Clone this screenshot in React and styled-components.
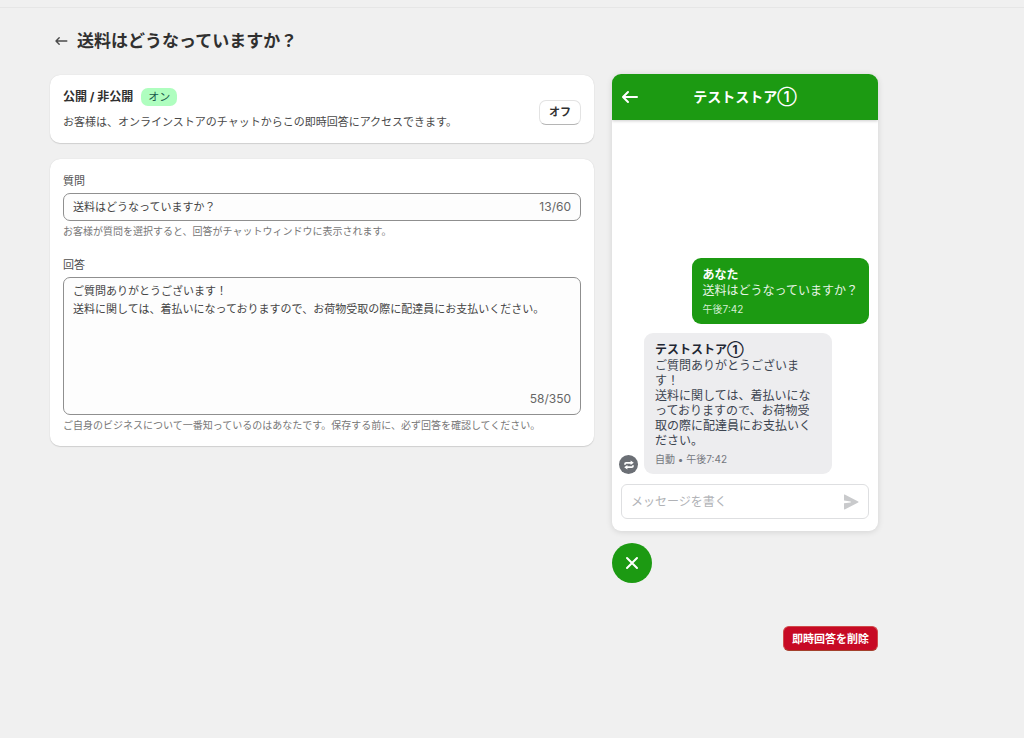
import React, { useState } from "react"
import styled, { createGlobalStyle } from "styled-components"


const storeName = "テストストア①"

const App = () => {

  const [question, setQuestion] = useState("送料はどうなっていますか？")
  const [answer, setAnswer] = useState(
    "ご質問ありがとうございます！\n送料に関しては、着払いになっておりますので、お荷物受取の際に配達員にお支払いください。"
  )

  return (
    <>
      <GlobalStyle />
      <TopBar />
      <Page>
        <TitleRow>
          <BackLink href="#" aria-label="戻る">
            <svg width="14" height="12" viewBox="0 0 14 12" fill="none" stroke="#4a4a4a" strokeWidth="1.4" strokeLinecap="round" strokeLinejoin="round">
              <path d="M12.8 6H2.5M5.2 2.7L2 6L5.2 9.3" />
            </svg>
          </BackLink>
          <h1>送料はどうなっていますか？</h1>
        </TitleRow>

        <Columns>
          <Main>
            <StatusCard>
              <div>
                <StatusHeading>
                  <h2>公開 / 非公開</h2>
                  <Badge>オン</Badge>
                </StatusHeading>
                <StatusText>お客様は、オンラインストアのチャットからこの即時回答にアクセスできます。</StatusText>
              </div>
              <ToggleButton type="button">オフ</ToggleButton>
            </StatusCard>

            <FormCard>
              <Field>
                <Label htmlFor="question">質問</Label>
                <InputBox>
                  <TextInput id="question" value={question} onChange={e => setQuestion(e.target.value)} />
                  <Counter>{question.length}/60</Counter>
                </InputBox>
                <Help>お客様が質問を選択すると、回答がチャットウィンドウに表示されます。</Help>
              </Field>
              <Field>
                <Label htmlFor="answer">回答</Label>
                <AreaBox>
                  <TextArea id="answer" rows={6} value={answer} onChange={e => setAnswer(e.target.value)} />
                  <Counter>{answer.length}/350</Counter>
                </AreaBox>
                <Help>ご自身のビジネスについて一番知っているのはあなたです。保存する前に、必ず回答を確認してください。</Help>
              </Field>
            </FormCard>
          </Main>

          <Side>
            <Chat>
              <ChatHeader>
                <ChatBack type="button" aria-label="戻る">
                  <svg width="18" height="14" viewBox="0 0 18 14" fill="none" stroke="#fff" strokeWidth="2" strokeLinecap="round" strokeLinejoin="round">
                    <path d="M16 7H2.4M7 2L2 7L7 12" />
                  </svg>
                </ChatBack>
                <h2>{storeName}</h2>
              </ChatHeader>
              <Messages>
                <Bubble $own>
                  <strong>あなた</strong>
                  <p>{question}</p>
                  <Time $own>午後7:42</Time>
                </Bubble>
                <BotRow>
                  <BotIcon>
                    <svg width="12" height="12" viewBox="0 0 12 12" fill="none" stroke="#fff" strokeWidth="1.7">
                      <path d="M2 5.8V5Q2 3.8 3.2 3.8H8" />
                      <path d="M10 6.2V7Q10 8.2 8.8 8.2H4" />
                      <path d="M7.6 1.4L10.8 3.8L7.6 6ZM4.4 6L1.2 8.2L4.4 10.6Z" fill="#fff" stroke="none" />
                    </svg>
                  </BotIcon>
                  <Bubble>
                    <strong>{storeName}</strong>
                    <p>{answer}</p>
                    <Time>自動 • 午後7:42</Time>
                  </Bubble>
                </BotRow>
              </Messages>
              <Composer>
                <input type="text" placeholder="メッセージを書く" aria-label="メッセージを書く" />
                <button type="button" aria-label="送信">
                  <svg width="16" height="16" viewBox="0 0 16 16" fill="#c9cacc">
                    <path d="M1 .8Q1 .2 1.7 .5L15.2 7.4Q16 8 15.2 8.5L1.7 15.5Q1 15.8 1 15.1V9.3L7.6 8.5Q8.2 8 7.6 7.4L1 6.6Z" />
                  </svg>
                </button>
              </Composer>
            </Chat>
            <CloseButton type="button" aria-label="閉じる">
              <svg width="14" height="14" viewBox="0 0 14 14" fill="none" stroke="#fff" strokeWidth="2" strokeLinecap="round">
                <path d="M2 2L12 12M12 2L2 12" />
              </svg>
            </CloseButton>
          </Side>
        </Columns>

        <Footer>
          <DeleteButton type="button">即時回答を削除</DeleteButton>
        </Footer>
      </Page>
    </>
  )
}

export default App



const GlobalStyle = createGlobalStyle`
  *{
    box-sizing: border-box;
  }

  body{
    margin: 0;
    background: #f0f0f0;
    color: #303030;
    font-family: Inter, "Noto Sans CJK JP", sans-serif;
    font-size: 11px;
    line-height: 18px;
  }

  h1, h2, p{
    margin: 0;
  }

  button, input, textarea{
    font: inherit;
    color: inherit;
  }

  button{
    cursor: pointer;
  }

  svg{
    display: block;
  }
`

const TopBar = styled.div`
  height: 8px;
  border-bottom: 1px solid #e6e6e6;
`

const Page = styled.div`
  max-width: 878px;
  padding: 20px 0 32px 50px;
`

const TitleRow = styled.header`
  display: flex;
  align-items: center;
  gap: 9px;
  padding-left: 4px;
  margin-bottom: 20px;

  >h1{
    font-size: 17px;
    font-weight: 700;
    line-height: 26px;
  }
`

const BackLink = styled.a`
  display: block;
`

const Columns = styled.div`
  display: grid;
  grid-template-columns: minmax(0, 1fr) 266px;
  gap: 18px;
  align-items: start;
`

const Main = styled.main`
  display: grid;
  gap: 16px;
  padding-top: 1px;
`

const Card = styled.section`
  background: #fff;
  border-radius: 10px;
  padding: 13px;
  box-shadow: 0 1px 1px #d0d0d0, 0 0 1px #cccccc;
`

const StatusCard = styled(Card)`
  display: flex;
  align-items: center;
  justify-content: space-between;
  gap: 16px;
  padding-bottom: 12px;
  padding-top: 12px;
`

const StatusHeading = styled.div`
  display: flex;
  align-items: center;
  gap: 8px;
  margin-bottom: 6px;

  >h2{
    font-size: 12px;
    font-weight: 700;
    line-height: 20px;
  }
`

const Badge = styled.span`
  padding: 0 7px;
  border-radius: 7px;
  background: #affebf;
  color: #1a5a4c;
`

const StatusText = styled.p`
  color: #4a4a4a;
`

const ToggleButton = styled.button`
  height: 25px;
  margin-top: 6px;
  padding: 0 9px;
  border: 1px solid #e3e3e3;
  border-bottom-color: #b5b5b5;
  border-radius: 7px;
  background: #fff;
  font-weight: 600;
`

const FormCard = styled(Card)`
  display: grid;
  gap: 16px;
  padding-bottom: 12px;
`

const Field = styled.div`
  display: flex;
  flex-direction: column;
`

const Label = styled.label`
  margin-bottom: 3px;
  color: #505050;
`

const InputBox = styled.div`
  display: flex;
  align-items: center;
  height: 28px;
  padding: 0 9px;
  border: 1px solid #8f8f8f;
  border-radius: 7px;
  background: #fdfdfd;
`

const TextInput = styled.input`
  flex: 1;
  min-width: 0;
  padding: 0;
  border: 0;
  outline: 0;
  background: transparent;
  color: #444;
`

const AreaBox = styled(InputBox)`
  flex-direction: column;
  align-items: stretch;
  height: auto;
  padding: 4px 9px 6px;
`

const TextArea = styled.textarea`
  display: block;
  padding: 0;
  border: 0;
  outline: 0;
  resize: none;
  background: transparent;
  color: #444;
`

const Counter = styled.span`
  align-self: flex-end;
  margin: auto 0;
  color: #666;
  font-size: 12px;
  text-align: right;
`

const Help = styled.p`
  margin-top: 1px;
  color: #777;
  font-size: 10px;
`

const Side = styled.aside`
  display: grid;
  gap: 12px;
`

const Chat = styled.section`
  overflow: hidden;
  border-radius: 9px;
  background: #fff;
  box-shadow: 0 1px 6px rgba(0, 0, 0, 0.12);
`

const ChatHeader = styled.div`
  display: grid;
  grid-template-columns: 18px 1fr 18px;
  align-items: center;
  height: 46px;
  padding: 0 9px;
  background: #1c9a12;
  color: #fff;
  box-shadow: 0 1px 3px rgba(0, 0, 0, 0.2);

  >h2{
    font-size: 14px;
    font-weight: 600;
    text-align: center;
  }
`

const ChatBack = styled.button`
  padding: 0;
  border: 0;
  background: transparent;
`

const Messages = styled.div`
  display: flex;
  flex-direction: column;
  justify-content: flex-end;
  gap: 9px;
  min-height: 354px;
  padding: 0 9px;
`

const Bubble = styled.div`
  align-self: ${props => props.$own ? "flex-end" : "auto"};
  max-width: ${props => props.$own ? "100%" : "188px"};
  padding: 8px 11px 7px;
  border-radius: 9px;
  background: ${props => props.$own ? "#1c9a12" : "#ededef"};
  color: ${props => props.$own ? "#fff" : "#3c4450"};
  font-size: 12px;
  line-height: 15px;

  >strong{
    display: block;
    color: ${props => props.$own ? "#fff" : "#1f2733"};
    line-height: 17px;
  }
  >p{
    white-space: pre-wrap;
    opacity: ${props => props.$own ? 0.9 : 1};
  }
`

const Time = styled.span`
  display: block;
  margin-top: 3px;
  color: ${props => props.$own ? "#d5edd2" : "#74777d"};
  font-size: 10px;
  line-height: 16px;
`

const BotRow = styled.div`
  display: flex;
  align-items: flex-end;
  gap: 6px;
  margin-left: -2px;
`

const BotIcon = styled.span`
  display: grid;
  place-items: center;
  width: 19px;
  height: 19px;
  border-radius: 50%;
  background: #6b6f75;
`

const Composer = styled.div`
  display: flex;
  align-items: center;
  height: 35px;
  margin: 10px 9px 12px;
  padding: 0 9px;
  border: 1px solid #dedfe1;
  border-radius: 6px;

  >input{
    flex: 1;
    min-width: 0;
    padding: 0;
    border: 0;
    outline: 0;
    background: transparent;
    font-size: 12px;

    &::placeholder{
      color: #b0b2b6;
    }
  }
  >button{
    padding: 0;
    border: 0;
    background: transparent;
  }
`

const CloseButton = styled.button`
  display: grid;
  place-items: center;
  width: 40px;
  height: 40px;
  padding: 0;
  border: 0;
  border-radius: 50%;
  background: #1c9a12;
`

const Footer = styled.footer`
  display: flex;
  justify-content: flex-end;
  margin-top: 43px;
`

const DeleteButton = styled.button`
  height: 25px;
  padding: 0 8px;
  border: 1px solid #d04a4a;
  border-bottom-color: #a3402c;
  border-radius: 6px;
  background: #c70a24;
  color: #fff;
  font-size: 11px;
  font-weight: 700;
`
